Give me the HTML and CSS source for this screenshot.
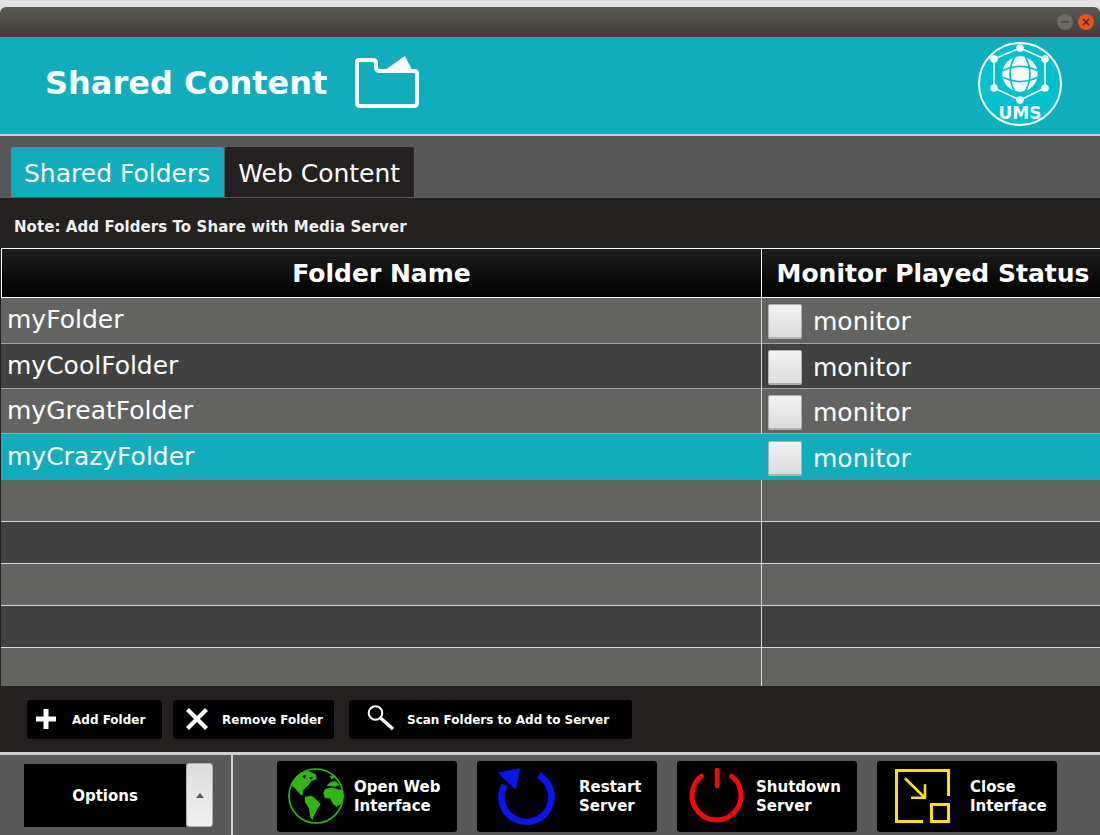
FILE: index.html
```html
<!DOCTYPE html>
<html lang="en">
<head>
    <meta charset="UTF-8">
    <title>Shared Content</title>
    <link rel="stylesheet" href="styles.css">
</head>
<body>
    <div class="window">
        <div class="titlebar">
            <span class="win-btn win-min"><svg width="10" height="10" viewBox="0 0 10 10"><path d="M1 5H9" stroke="#3a3a36" stroke-width="1.2"/></svg></span>
            <span class="win-btn win-close"><svg width="10" height="10" viewBox="0 0 10 10"><path d="M2 2L8 8M8 2L2 8" stroke="#4a2010" stroke-width="1.3"/></svg></span>
        </div>

        <header class="banner">
            <h1>Shared Content</h1>
            <svg class="banner-folder" width="66" height="53" viewBox="0 0 66 53">
                <path d="M4 4H18Q21 4 21 7V11Q21 15 25 15H59Q62 15 62 18V47Q62 50 59 50H5Q2 50 2 47V6Q2 4 4 4Z" fill="none" stroke="#fff" stroke-width="4"/>
                <path d="M30 14L50 0L57 14Z" fill="#fff"/>
            </svg>
            <svg class="banner-logo" width="84" height="84" viewBox="0 0 84 84">
                <circle cx="42" cy="42" r="41" fill="#00c0cd" stroke="#fff" stroke-width="2"/>
                <path d="M42 6L67 17V46L42 58L16 46V17Z" fill="none" stroke="#fff" stroke-width="1.6"/>
                <circle cx="42" cy="6" r="3.8" fill="#fff"/>
                <circle cx="16" cy="17" r="3.8" fill="#fff"/>
                <circle cx="67" cy="17" r="3.8" fill="#fff"/>
                <circle cx="16" cy="46" r="3.8" fill="#fff"/>
                <circle cx="67" cy="46" r="3.8" fill="#fff"/>
                <circle cx="42" cy="58" r="3.8" fill="#fff"/>
                <circle cx="42" cy="32" r="17.7" fill="#fff"/>
                <path d="M24.300 28.700Q42 20.100 59.700 28.700M24.300 35.300Q42 43.900 59.700 35.300M37 14Q27 32 37 50M47 14Q57 32 47 50" fill="none" stroke="#00c0cd" stroke-width="1.7"/>
                <text class="logo-text" x="42" y="77" text-anchor="middle">UMS</text>
            </svg>
        </header>

        <nav class="tabs">
            <div class="tab tab-active">Shared Folders</div>
            <div class="tab">Web Content</div>
        </nav>

        <main class="panel">
            <p class="note">Note: Add Folders To Share with Media Server</p>

            <table class="folders">
                <thead>
                    <tr>
                        <th class="col-name">Folder Name</th>
                        <th class="col-status">Monitor Played Status</th>
                    </tr>
                </thead>
                <tbody>
                    <tr class="row row-odd row-wide">
                        <td>myFolder</td>
                        <td><div class="monitor"><span class="check"></span>monitor</div></td>
                    </tr>
                    <tr class="row row-even">
                        <td>myCoolFolder</td>
                        <td><div class="monitor"><span class="check"></span>monitor</div></td>
                    </tr>
                    <tr class="row row-odd">
                        <td>myGreatFolder</td>
                        <td><div class="monitor"><span class="check"></span>monitor</div></td>
                    </tr>
                    <tr class="row row-selected row-wide">
                        <td>myCrazyFolder</td>
                        <td><div class="monitor"><span class="check"></span>monitor</div></td>
                    </tr>
                    <tr class="blank row-odd"><td></td><td></td></tr>
                    <tr class="blank row-even"><td></td><td></td></tr>
                    <tr class="blank row-odd"><td></td><td></td></tr>
                    <tr class="blank row-even"><td></td><td></td></tr>
                    <tr class="blank blank-last row-odd"><td></td><td></td></tr>
                </tbody>
            </table>

            <div class="actions">
                <button class="action action-add">
                    <svg width="20" height="20" viewBox="0 0 20 20"><path d="M10 0V20M0 10H20" stroke="#fff" stroke-width="5"/></svg>
                    Add Folder
                </button>
                <button class="action action-remove">
                    <svg width="24" height="24" viewBox="0 0 24 24"><path d="M2.500 2.500L21.500 21.500M21.500 2.500L2.500 21.500" stroke="#fff" stroke-width="4.200"/></svg>
                    Remove Folder
                </button>
                <button class="action action-scan">
                    <svg width="28" height="26" viewBox="0 0 28 26"><circle cx="8.500" cy="8" r="6.800" fill="none" stroke="#fff" stroke-width="2"/><path d="M13.500 13L26 24" stroke="#fff" stroke-width="3.400"/></svg>
                    Scan Folders to Add to Server
                </button>
            </div>
        </main>

        <footer class="footer">
            <div class="options-box">
                <div class="options">Options</div>
                <div class="spinner"><span class="spinner-arrow"></span></div>
            </div>
            <div class="commands">
                <button class="command">
                    <svg width="58" height="58" viewBox="0 0 58 58">
                        <circle cx="29" cy="28" r="27" fill="none" stroke="#2fb80f" stroke-width="1.700"/>
                        <path d="M7 12L9.700 7.700L14.700 4.300L21.300 3L28.700 6.300L29.700 11L24.700 13L21.300 17L16.300 22L15.300 27.700L18.700 29.700L13 26.300L8 20.300L4.700 17.700Z" fill="#2fb80f"/>
                        <path d="M18 28.700L24.700 27.700L29.700 32L33.700 36.300L29.700 42L27.300 47L25.300 52L23 48.700L22 40.300L18 34.300Z" fill="#2fb80f"/>
                        <path d="M36.300 25.300L38 21L44.700 19.700L54.700 22L56.700 27L55.300 35.300L49.700 38.700L46 36L43 30.300L38 30.300Z" fill="#2fb80f"/>
                        <path d="M39.700 17.700L43 14.300L48 13L53 17L48 18.700Z" fill="#2fb80f"/>
                        <path d="M43 8L46 7L48 10L44 11Z" fill="#2fb80f"/>
                        <path d="M15 8L19 7L18 11ZM22 9L26 9L24 12Z" fill="#000"/>
                    </svg>
                    <span class="command-label command-label-web">Open Web<br>Interface</span>
                </button>
                <button class="command command-restart">
                    <svg width="58" height="58" viewBox="0 0 58 58">
                        <path d="M41.600 7.100A25 25 0 1 1 7.500 17" fill="none" stroke="#0a14f5" stroke-width="6.500"/>
                        <path d="M0.700 4.700L23 0.300L19 22Z" fill="#0a14f5"/>
                    </svg>
                    <span class="command-label command-label-restart">Restart<br>Server</span>
                </button>
                <button class="command">
                    <svg width="58" height="58" viewBox="0 0 58 58">
                        <path d="M43 7A24.500 24.500 0 1 1 16 7" fill="none" stroke="#f40808" stroke-width="5"/>
                        <path d="M30 2V18" stroke="#f40808" stroke-width="4.500" stroke-linecap="round"/>
                    </svg>
                    <span class="command-label command-label-shutdown">Shutdown<br>Server</span>
                </button>
                <button class="command command-close">
                    <svg width="58" height="58" viewBox="0 0 58 58">
                        <path d="M29 53.500H2.500V2.500H54.500V28" fill="none" stroke="#ffe100" stroke-width="3"/>
                        <rect x="37.500" y="36.500" width="17" height="17" fill="none" stroke="#ffe100" stroke-width="3"/>
                        <path d="M11 10.300L31 30M17 29.700H32M31 16.300V30" fill="none" stroke="#ffe100" stroke-width="2.600"/>
                    </svg>
                    <span class="command-label command-label-close">Close<br>Interface</span>
                </button>
            </div>
        </footer>
    </div>
</body>
</html>
```

FILE: styles.css
```css
* {
    box-sizing: border-box;
}

body {
    margin: 0;
    background-color: #e2e2e2;
    font-family: "DejaVu Sans", sans-serif;
    overflow: hidden;
}

.window {
    width: 1100px;
    height: 835px;
    padding-top: 7px;
    display: flex;
    flex-direction: column;
    color: #fff;
}

.titlebar {
    height: 30px;
    flex: none;
    padding-right: 6px;
    display: flex;
    justify-content: flex-end;
    align-items: center;
    gap: 5px;
    border-radius: 6px 6px 0 0;
    background: linear-gradient(#5c5950, #3e3d39);
}

.win-btn {
    width: 16px;
    height: 16px;
    border-radius: 50%;
    display: flex;
    align-items: center;
    justify-content: center;
}

.win-min {
    background-color: #6c6b66;
}

.win-close {
    background-color: #e8541f;
}

.banner {
    height: 99px;
    flex: none;
    padding: 0 38px 0 45px;
    display: flex;
    align-items: center;
    background-color: #11adbc;
    border-bottom: 2px solid #cfcfcf;
}

.banner h1 {
    margin: 0 28px 6px 0;
    font-size: 32px;
    font-weight: bold;
}

.banner-folder {
    margin-top: -7px;
}

.banner-logo {
    margin-left: auto;
    margin-top: -4px;
}

.logo-text {
    font-size: 17px;
    font-weight: bold;
    fill: #fff;
}

.tabs {
    height: 62px;
    flex: none;
    padding: 11px 0 0 11px;
    display: flex;
    gap: 1px;
    background-color: #585858;
}

.tab {
    height: 50px;
    padding: 2px 14px 0 13px;
    display: flex;
    align-items: center;
    font-size: 25px;
    background-color: #252120;
    border-radius: 2px 2px 0 0;
}

.tab-active {
    background-color: #11adbc;
}

.panel {
    height: 554px;
    flex: none;
    background-color: #252120;
}

.note {
    height: 50px;
    margin: 0;
    padding: 20px 0 0 14px;
    font-size: 15px;
    font-weight: bold;
    letter-spacing: 0.07px;
    color: #f0f0f0;
}

.folders {
    width: 1099px;
    height: 438px;
    margin-left: 1px;
    table-layout: fixed;
    border-collapse: separate;
    border-spacing: 0;
}

.folders th {
    height: 50px;
    padding: 0;
    font-size: 25px;
    font-weight: bold;
    background: linear-gradient(#1e1e1e, #000);
    border-top: 1px solid #fff;
    border-bottom: 1px solid #fff;
}

.col-name {
    width: 761px;
    border-left: 1px solid #fff;
    border-right: 1px solid #fff;
}

.folders .col-status {
    padding-left: 4px;
}

.folders td {
    padding: 0;
    font-size: 25px;
}

.row td {
    height: 45px;
    padding-left: 6px;
    padding-bottom: 2px;
    border-bottom: 1px solid #a6a6a6;
}

.row-wide td {
    height: 46px;
}

.row td:first-child,
.blank td:first-child {
    border-right: 1px solid #d8d8d8;
}

.row td:last-child {
    padding: 2px 0 0 6px;
}

.row-odd {
    background-color: #636362;
}

.row-even {
    background-color: #414141;
}

.row-selected {
    background-color: #11adbc;
}

.row-selected td {
    border-bottom: none;
}

.row-selected td:first-child {
    border-right-color: #1aa3b0;
}

.blank td {
    height: 42px;
    border-bottom: 1px solid #d8d8d8;
}

.blank-last td {
    height: 38px;
    border-bottom: none;
}

.monitor {
    display: flex;
    align-items: center;
    gap: 11px;
}

.check {
    width: 34px;
    height: 35px;
    border: 1px solid #b0b0b0;
    border-bottom-width: 2px;
    border-radius: 2px;
    background: linear-gradient(#f2f2f2, #dcdcdc);
}

.actions {
    height: 66px;
    padding: 14px 0 0 27px;
    display: flex;
    align-items: flex-start;
    gap: 11px;
}

button {
    font-family: "DejaVu Sans", sans-serif;
    font-weight: bold;
    color: #fff;
    background-color: #000;
    border: none;
    border-radius: 3px;
    display: flex;
    align-items: center;
    padding: 0;
}

.action {
    height: 39px;
    font-size: 12px;
}

.action svg {
    margin-bottom: 1px;
}

.action-add {
    width: 135px;
    padding-left: 9px;
    gap: 16px;
}

.action-remove {
    width: 161px;
    padding-left: 12px;
    gap: 13px;
}

.action-scan {
    width: 283px;
    margin-left: 4px;
    padding-left: 18px;
    gap: 12px;
}

.action-scan svg {
    margin-bottom: 3px;
}

.footer {
    height: 83px;
    flex: none;
    display: flex;
    background-color: #585858;
    border-top: 3px solid #cfcfcf;
}

.options-box {
    width: 233px;
    flex: none;
    padding: 8px 0 0 24px;
    display: flex;
    align-items: flex-start;
    border-right: 2px solid #cfcfcf;
}

.options {
    width: 162px;
    height: 63px;
    margin-top: 1px;
    display: flex;
    align-items: center;
    justify-content: center;
    font-size: 15px;
    font-weight: bold;
    background-color: #000;
}

.spinner {
    width: 27px;
    height: 64px;
    display: flex;
    align-items: center;
    justify-content: center;
    border: 1px solid #b0b0b0;
    border-radius: 3px;
    background: linear-gradient(#dcdcdc, #f0f0f0);
}

.spinner-arrow {
    width: 0;
    height: 0;
    border-left: 4px solid transparent;
    border-right: 4px solid transparent;
    border-bottom: 5px solid #555;
}

.commands {
    padding: 6px 0 0 44px;
    display: flex;
    align-items: flex-start;
    gap: 20px;
}

.command {
    width: 180px;
    height: 71px;
    padding-left: 10px;
    font-size: 15px;
    line-height: 19px;
    text-align: left;
}

.command svg {
    margin-top: 1px;
}

.command-restart {
    padding-left: 20px;
}

.command-close {
    padding-left: 17px;
}

.command-label-web {
    margin-left: 9px;
}

.command-label-restart {
    margin-left: 24px;
}

.command-label-shutdown {
    margin-left: 11px;
}

.command-label-close {
    margin-left: 18px;
}
```
